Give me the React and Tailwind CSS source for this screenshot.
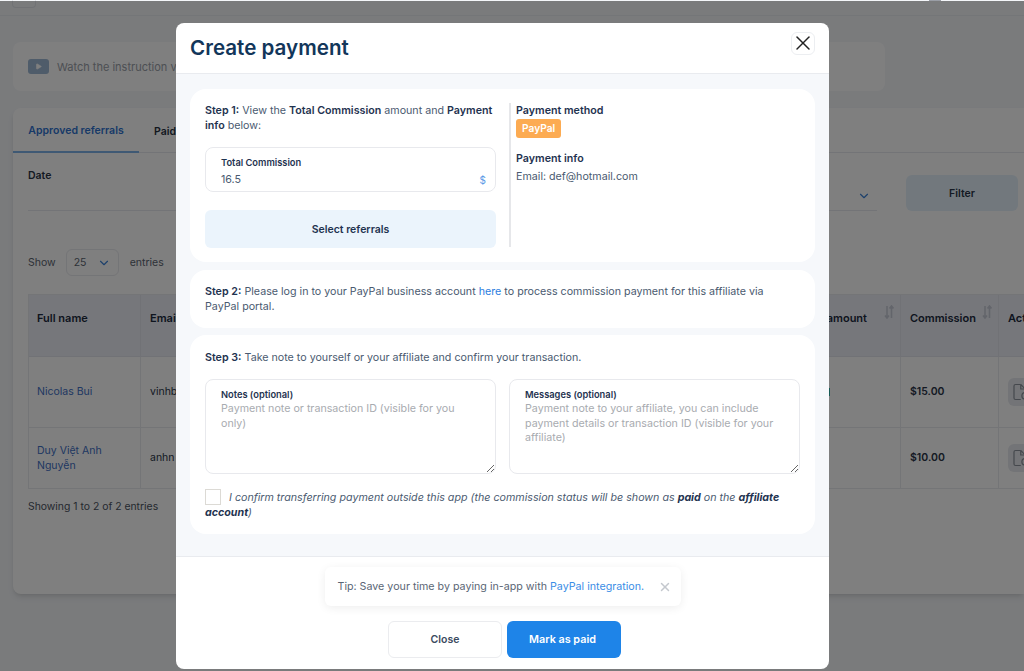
import { X, ChevronDown, Play } from "lucide-react";

const SortIcon = () => (
  <svg viewBox="0 0 10 14" fill="none" stroke="#c6cbd6" strokeWidth="1.6" className="absolute right-[6px] top-[10px] w-[10px] h-[14px]">
    <path d="M3 1v12M1 10.5 3 13l2-2.5" />
    <path d="M7.5 13V1M5.5 3.5 7.5 1l2 2.5" />
  </svg>
);

const ActionButton = () => (
  <div className="w-[28px] h-[28px] rounded-md bg-[#e6e9ee] shrink-0 flex items-center pl-[3px]">
    <svg viewBox="0 0 24 24" fill="none" stroke="#8b919b" strokeWidth="1.6" className="w-[18px] h-[18px] shrink-0">
      <path d="M13 2H6a2 2 0 0 0-2 2v16a2 2 0 0 0 2 2h7" />
      <path d="M13 2v6h6M13 2l6 6v3" />
      <circle cx="19" cy="17" r="4.5" />
    </svg>
  </div>
);

const Background = () => (
  <div className="h-[671px] overflow-hidden bg-[#f4f6f9] text-[10.5px] text-[#2a3547]">
    <div className="h-[16px] border-b border-[#e9ecf0] pl-[12px] flex items-start justify-between pr-[83px]">
      <div className="w-[24px] h-[8px] rounded-b border border-t-0 border-[#e2e5ea]"></div>
      <div className="w-[12px] h-[1px] bg-[#9a9ea6]"></div>
    </div>

    <div className="mx-[13px] mt-[26px] w-[872px] h-[49px] bg-white rounded-lg flex items-center gap-[8px] px-[15px]">
      <div className="w-[21px] h-[15px] bg-[#9fb8d4] rounded-[3px] flex items-center justify-center">
        <Play className="w-[7px] h-[7px] text-white" fill="white" />
      </div>
      <span className="text-[#9aa0a8] text-[11px] pt-px">Watch the instruction video</span>
    </div>

    <div className="ml-[13px] mt-[17px] h-[486px] bg-white rounded-l-lg shadow-md">
      <div className="h-[45px] flex items-stretch border-b border-[#e6e9ee]">
        <div className="w-[126px] -mb-px border-b-2 border-[#7fb2e8] text-[#2f73d0] font-semibold flex items-center justify-center text-[10.5px] pt-[3px]">
          Approved referrals
        </div>
        <div className="pl-[15px] flex items-center font-semibold text-[#26303e] text-[10.5px] pt-[3px]">Paid</div>
      </div>

      <div className="flex items-start pl-[15px] pt-[15px]">
        <div className="w-[849px] h-[43px] border-b border-[#e6e9ee] font-semibold text-[10.5px] relative">
          Date
          <ChevronDown className="absolute right-[6px] top-[21px] w-[14px] h-[14px] text-[#3d83d8]" />
        </div>
        <div className="ml-[29px] mt-[7px] w-[112px] h-[36px] pt-px bg-[#e4f1fb] rounded-md flex items-center justify-center font-semibold text-[10.5px]">
          Filter
        </div>
      </div>

      <div className="flex items-center pl-[15px] mt-[38px] h-[27px] text-[#5b6470] text-[10.5px]">
        <span>Show</span>
        <div className="ml-[10px] w-[53px] h-[27px] border border-[#e8eaee] rounded-md flex items-center justify-between px-[7px]">
          25
          <ChevronDown className="w-[14px] h-[14px] text-[#3d83d8]" />
        </div>
        <span className="ml-[11px]">entries</span>
      </div>

      <div className="ml-[15px] mt-[18px] border-t border-l border-[#e9ebef] overflow-hidden">
        <div className="flex h-[62px] bg-[#edeff6] border-b border-[#e3e5ec] font-semibold text-[11px] text-[#1c2a3f]">
          <div className="w-[112px] shrink-0 border-r border-[#e3e5ec] flex items-center pl-[8px] pb-[14px]">Full name</div>
          <div className="w-[620px] shrink-0 border-r border-[#e3e5ec] flex items-center pl-[9px] pb-[14px]">Email</div>
          <div className="w-[140px] shrink-0 relative border-r border-[#e3e5ec] flex items-center justify-end pr-[33px] pb-[14px]">
            amount
            <SortIcon />
          </div>
          <div className="w-[98px] shrink-0 relative border-r border-[#e3e5ec] flex items-center pl-[9px] pb-[14px]">
            Commission
            <SortIcon />
          </div>
          <div className="w-[60px] shrink-0 flex items-center pl-[9px] pb-[14px]">Action</div>
        </div>

        <div className="flex h-[71px] border-b border-[#e9ebef]">
          <div className="w-[112px] shrink-0 border-r border-[#e9ebef] flex items-center pl-[8px] text-[#3f6fc4]">Nicolas Bui</div>
          <div className="w-[620px] shrink-0 border-r border-[#e9ebef] flex items-center pl-[9px]">vinhb</div>
          <div className="w-[140px] shrink-0 border-r border-[#e9ebef] flex items-center">
            <div className="ml-[65px] w-[4px] h-[8px] bg-[#2bb5a8]"></div>
          </div>
          <div className="w-[98px] shrink-0 border-r border-[#e9ebef] flex items-center pl-[9px] font-semibold">$15.00</div>
          <div className="w-[60px] shrink-0 flex items-center pl-[9px]">
            <ActionButton />
          </div>
        </div>

        <div className="flex h-[61px] border-b border-[#e9ebef]">
          <div className="w-[112px] shrink-0 border-r border-[#e9ebef] flex items-center pl-[8px] text-[#3f6fc4] leading-[15px]">
            Duy Việt Anh
            <br />
            Nguyễn
          </div>
          <div className="w-[620px] shrink-0 border-r border-[#e9ebef] flex items-center pl-[9px]">anhn</div>
          <div className="w-[140px] shrink-0 border-r border-[#e9ebef]"></div>
          <div className="w-[98px] shrink-0 border-r border-[#e9ebef] flex items-center pl-[9px] font-semibold">$10.00</div>
          <div className="w-[60px] shrink-0 flex items-center pl-[9px]">
            <ActionButton />
          </div>
        </div>
      </div>

      <div className="pl-[15px] mt-[10px] text-[#4a525e] text-[10.4px]">Showing 1 to 2 of 2 entries</div>
    </div>
  </div>
);

const NoteField = ({ label, placeholder }) => (
  <div className="relative flex-1">
    <span className="absolute left-[16px] top-[9px] text-[9.3px] font-semibold text-[#1f3350]">{label}</span>
    <textarea
      placeholder={placeholder}
      className="block w-full h-[95px] border border-[#e8e9ed] rounded-lg pt-[22px] px-[15px] text-[10.7px] leading-[14.5px] outline-none placeholder:text-[#a8abb0]"
    />
  </div>
);

const PaymentModal = () => (
  <div className="absolute inset-0 top-px bg-black/50 overflow-hidden">
    <div className="ml-[176px] mt-[22px] w-[653px] h-[646px] bg-white rounded-lg overflow-hidden flex flex-col text-[10.7px] text-[#1f3350]">
      <div className="h-[51px] shrink-0 border-b border-[#e9ebef] flex items-center justify-between px-[14px]">
        <h2 className="text-[20.6px] font-semibold text-[#12365a]">Create payment</h2>
        <button className="w-[24px] h-[23px] mb-[10px] border border-[#eceef1] rounded-md flex items-center justify-center">
          <X className="w-[24px] h-[24px] shrink-0 text-[#222]" strokeWidth={1.5} />
        </button>
      </div>

      <div className="h-[482px] shrink-0 bg-[#f6f8fb] px-[14px] pt-[15px] flex flex-col text-[#4a5a70]">
        <div className="h-[173px] bg-white rounded-2xl flex p-[15px] pt-[14px]">
          <div className="w-[291px] shrink-0">
            <p className="leading-[15px]">
              <b className="font-semibold text-[#1f3350]">Step 1:</b> View the{" "}
              <b className="font-semibold text-[#1f3350]">Total Commission</b> amount and{" "}
              <b className="font-semibold text-[#1f3350]">Payment info</b> below:
            </p>
            <div className="mt-[14px] h-[45px] border border-[#e8e9ed] rounded-lg pl-[15px] pr-[9px] pt-[8px]">
              <div className="text-[9.3px] font-semibold text-[#1f3350] leading-[13px]">Total Commission</div>
              <div className="flex justify-between items-center mt-[3px] text-[10.7px]">
                <span>16.5</span>
                <span className="text-[#5b9be6] text-[10px]">$</span>
              </div>
            </div>
            <button className="mt-[18px] w-full h-[38px] pt-px bg-[#ebf4fc] rounded-md font-semibold text-[10.5px] text-[#1f3350]">
              Select referrals
            </button>
          </div>
          <div className="ml-[13px] pl-[5px] border-l-2 border-[#e6e7ea]">
            <div className="font-semibold text-[#1f3350] leading-[15px]">Payment method</div>
            <span className="mt-px inline-flex items-center h-[19px] px-[6px] rounded-[3px] bg-[#fcab52] text-white font-semibold text-[10.2px]">
              PayPal
            </span>
            <div className="mt-[13px] font-semibold text-[#1f3350] leading-[15px]">Payment info</div>
            <div className="mt-[2px] leading-[17px]">Email: def@hotmail.com</div>
          </div>
        </div>

        <div className="h-[58px] mt-[8px] bg-white rounded-2xl px-[15px] flex items-center">
          <p className="leading-[15px]">
            <b className="font-semibold text-[#1f3350]">Step 2:</b> Please log in to your PayPal business account{" "}
            <a className="text-[#2b7de0]">here</a> to process commission payment for this affiliate via PayPal portal.
          </p>
        </div>

        <div className="h-[199px] mt-[7px] bg-white rounded-2xl px-[15px] pt-[15px]">
          <p className="leading-[15px]">
            <b className="font-semibold text-[#1f3350]">Step 3:</b> Take note to yourself or your affiliate and confirm your transaction.
          </p>
          <div className="flex gap-[13px] mt-[14px]">
            <NoteField label="Notes (optional)" placeholder="Payment note or transaction ID (visible for you only)" />
            <NoteField
              label="Messages (optional)"
              placeholder="Payment note to your affiliate, you can include payment details or transaction ID (visible for your affiliate)"
            />
          </div>
          <div className="mt-[15px] pr-[10px]">
            <div className="float-left w-[16px] h-[16px] border border-[#dcdad5] mr-[8px] bg-white"></div>
            <p className="italic leading-[15px] pt-px">
              I confirm transferring payment outside this app (the commission status will be shown as{" "}
              <b className="font-bold text-[#1f3350]">paid</b> on the <b className="font-bold text-[#1f3350]">affiliate account</b>)
            </p>
          </div>
        </div>
      </div>

      <div className="flex-1 border-t border-[#e9ebef] flex flex-col items-center pt-[10px]">
        <div className="w-[356px] h-[39px] pt-px rounded-md shadow-[0_2px_10px_rgba(0,0,0,0.07)] flex items-center justify-between pl-[13px] pr-[9px] text-[#5a6675]">
          <span>
            Tip: Save your time by paying in-app with <a className="text-[#3a8de6]">PayPal integration.</a>
          </span>
          <X className="w-[14px] h-[14px] text-[#c4c8ce]" strokeWidth={2.5} />
        </div>
        <div className="flex gap-[5px] mt-[15px] ml-[4px]">
          <button className="w-[114px] h-[37px] pt-px border border-[#ebecef] rounded-md font-semibold text-[10.5px] text-[#3b4a60]">
            Close
          </button>
          <button className="w-[114px] h-[37px] pt-px pr-[3px] bg-[#1e84e8] rounded-md font-semibold text-[10.8px] text-white">
            Mark as paid
          </button>
        </div>
      </div>
    </div>
  </div>
);

export default function App() {
  return (
    <div className="relative h-[671px] w-[1024px] overflow-hidden bg-white font-['Inter',sans-serif]">
      <Background />
      <PaymentModal />
    </div>
  );
}
